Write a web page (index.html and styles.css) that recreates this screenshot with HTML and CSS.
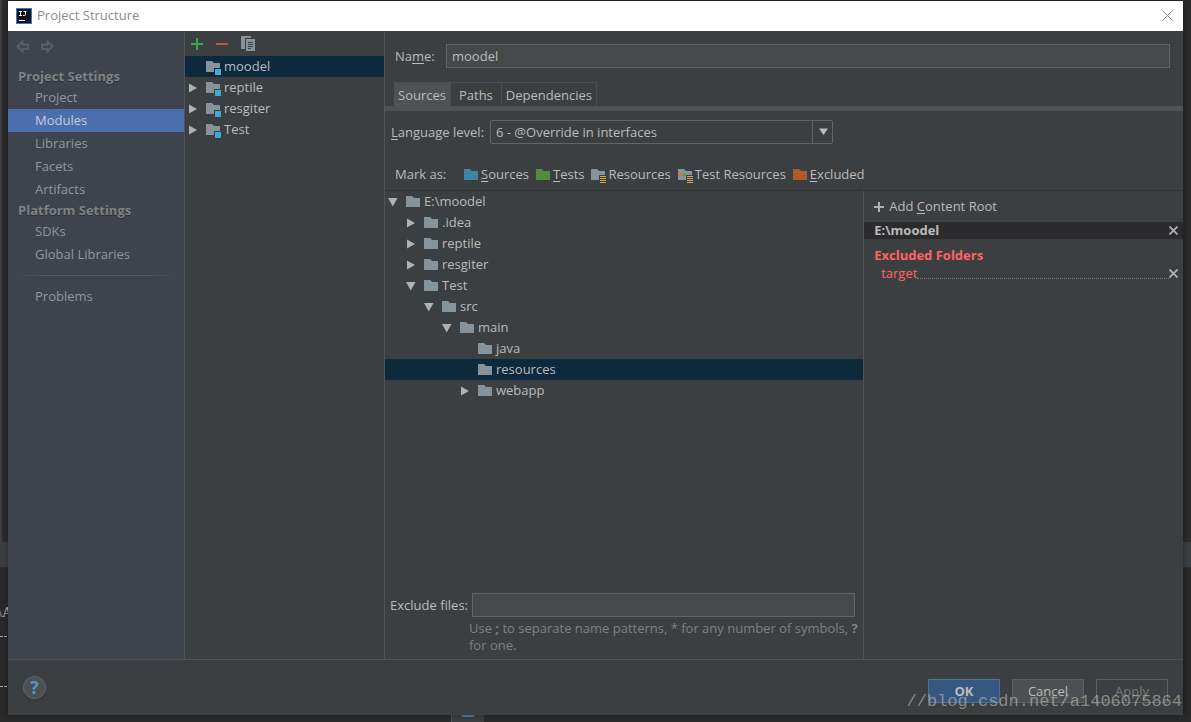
FILE: index.html
```
<!DOCTYPE html>
<html lang="en">
<head>
    <meta charset="UTF-8">
    <meta name="viewport" content="width=device-width, initial-scale=1.0">
    <title>Project Structure</title>
    <link rel="stylesheet" href="styles.css">
</head>
<body>
    <!-- Shared icons -->
    <svg class="sprite" aria-hidden="true">
        <symbol id="folder" viewBox="0 0 14 11"><path fill="currentColor" d="M0 0h6l2 2h6v9H0z"/></symbol>
        <symbol id="module" viewBox="0 0 16 14"><path fill="#87939a" d="M0 0h6l2 2h6v5H8v4H0z"/><path fill="#40a9d4" d="M9 8h6v6H9z"/></symbol>
        <symbol id="resources" viewBox="0 0 16 14"><path fill="#87939a" d="M0 0h6l2 2h6v4H8v5H0z"/><path fill="#d9a74a" d="M9 7h6v1H9zM9 9h6v1H9zM9 11h6v1H9zM9 13h6v1H9z"/></symbol>
        <symbol id="test-resources" viewBox="0 0 16 14"><path fill="#87939a" d="M0 0h6l2 2h6v4H8v5H0z"/><path fill="#f26522" d="M4 3v5L1 5.500z"/><path fill="#4fa52e" d="M5 3v5l3-2.500z"/><path fill="#d9a74a" d="M9 7h6v1H9zM9 9h6v1H9zM9 11h6v1H9zM9 13h6v1H9z"/></symbol>
        <symbol id="right" viewBox="0 0 10 10"><path fill="#afb1b3" d="M1 0.500v9L9 5z"/></symbol>
        <symbol id="down" viewBox="0 0 10 10"><path fill="#afb1b3" d="M0 1h9.500L4.750 9.500z"/></symbol>
        <symbol id="close" viewBox="0 0 9 9"><path fill="none" stroke="#b4b6b8" stroke-width="1.600" d="M.5.5l8 8M8.500.5l-8 8"/></symbol>
    </svg>

    <!-- Editor behind the dialog -->
    <div class="backdrop" aria-hidden="true">
        <div class="editor"></div>
        <div class="tool-bar"></div>
        <div class="console">
            <span class="path">\A</span>
            <span class="dash"></span>
            <span class="dash"></span>
        </div>
        <div class="task"><span></span></div>
    </div>

    <div class="dialog">
        <header class="title-bar">
            <svg class="logo" width="16" height="16" viewBox="0 0 16 16" aria-hidden="true">
                <rect width="16" height="16" fill="#1a80e6"/>
                <rect x="1" y="1" width="14" height="14" fill="#111"/>
                <path fill="none" stroke="#fff" d="M3 3.500h3M4.500 3v5M3 7.500h3M7.500 3.500h3M9.500 3v3.500q0 1-1 1H7"/>
                <path fill="#fff" d="M3 12h6v1H3z"/>
            </svg>
            <h1>Project Structure</h1>
            <button class="icon-btn" aria-label="Close window">
                <svg width="11" height="11" viewBox="0 0 11 11"><path fill="none" stroke="#888" d="M.5.5l10 10M10.500.5l-10 10"/></svg>
            </button>
        </header>

        <div class="panels">
            <nav class="sidebar">
                <div class="history">
                    <button class="icon-btn" aria-label="Back">
                        <svg width="13" height="13" viewBox="0 0 13 13"><path fill="none" stroke="#5c5e61" stroke-width="2" d="M6.500 1.500L1.500 6.500l5 5V9H12V4.500H6.500z"/></svg>
                    </button>
                    <button class="icon-btn" aria-label="Forward">
                        <svg width="13" height="13" viewBox="0 0 13 13"><path fill="none" stroke="#5c5e61" stroke-width="2" d="M6.500 1.500l5 5-5 5V9H1V4.500h5.500z"/></svg>
                    </button>
                </div>
                <h2>Project Settings</h2>
                <a href="#">Project</a>
                <a href="#" class="active">Modules</a>
                <a href="#">Libraries</a>
                <a href="#">Facets</a>
                <a href="#">Artifacts</a>
                <h2>Platform Settings</h2>
                <a href="#">SDKs</a>
                <a href="#">Global Libraries</a>
                <hr>
                <a href="#">Problems</a>
            </nav>

            <section class="modules">
                <div class="toolbar">
                    <button class="icon-btn" aria-label="Add">
                        <svg width="12" height="12" viewBox="0 0 12 12"><path fill="#32a950" d="M5 0h2v5h5v2H7v5H5V7H0V5h5z"/></svg>
                    </button>
                    <button class="icon-btn" aria-label="Remove">
                        <svg width="12" height="12" viewBox="0 0 12 12"><path fill="#c94f46" d="M0 5h12v2H0z"/></svg>
                    </button>
                    <button class="icon-btn" aria-label="Copy">
                        <svg width="14" height="15" viewBox="0 0 14 15"><path fill="#87939a" d="M0 0h10v2H4v11H0z"/><path fill="#87939a" d="M5 3h9v12H5z"/><path fill="#3c3f41" d="M7 6h5v1H7zM7 8h5v1H7zM7 10h5v1H7zM7 12h3v1H7z"/></svg>
                    </button>
                </div>
                <ul class="tree">
                    <li class="selected"><span class="arrow"></span><svg class="badge-icon"><use href="#module"/></svg>moodel</li>
                    <li><svg class="arrow"><use href="#right"/></svg><svg class="badge-icon"><use href="#module"/></svg>reptile</li>
                    <li><svg class="arrow"><use href="#right"/></svg><svg class="badge-icon"><use href="#module"/></svg>resgiter</li>
                    <li><svg class="arrow"><use href="#right"/></svg><svg class="badge-icon"><use href="#module"/></svg>Test</li>
                </ul>
            </section>

            <main class="editor-pane">
                <div class="name-row">
                    <label for="name">Na<u>m</u>e:</label>
                    <input type="text" id="name" value="moodel">
                </div>

                <div class="tabs" role="tablist">
                    <button class="active" role="tab" aria-selected="true">Sources</button>
                    <button role="tab">Paths</button>
                    <button role="tab">Dependencies</button>
                </div>

                <div class="level-row">
                    <label for="level"><u>L</u>anguage level:</label>
                    <div class="select">
                        <select id="level">
                            <option>6 - @Override in interfaces</option>
                        </select>
                        <span class="select-arrow"><svg width="9" height="8" viewBox="0 0 9 8"><path fill="#bbb" d="M0 0.500h9L4.500 7z"/></svg></span>
                    </div>
                </div>

                <div class="mark-row">
                    <span class="mark-label">Mark as:</span>
                    <button><svg class="folder sources"><use href="#folder"/></svg><span><u>S</u>ources</span></button>
                    <button><svg class="folder tests"><use href="#folder"/></svg><span><u>T</u>ests</span></button>
                    <button><svg class="badge-icon"><use href="#resources"/></svg><span>Resources</span></button>
                    <button><svg class="badge-icon"><use href="#test-resources"/></svg><span>Test Resources</span></button>
                    <button><svg class="folder excluded"><use href="#folder"/></svg><span><u>E</u>xcluded</span></button>
                </div>

                <div class="content">
                    <div class="content-tree">
                        <ul class="tree">
                            <li><svg class="arrow"><use href="#down"/></svg><svg class="folder"><use href="#folder"/></svg>E:\moodel</li>
                            <li class="depth-1"><svg class="arrow"><use href="#right"/></svg><svg class="folder"><use href="#folder"/></svg>.idea</li>
                            <li class="depth-1"><svg class="arrow"><use href="#right"/></svg><svg class="folder"><use href="#folder"/></svg>reptile</li>
                            <li class="depth-1"><svg class="arrow"><use href="#right"/></svg><svg class="folder"><use href="#folder"/></svg>resgiter</li>
                            <li class="depth-1"><svg class="arrow"><use href="#down"/></svg><svg class="folder"><use href="#folder"/></svg>Test</li>
                            <li class="depth-2"><svg class="arrow"><use href="#down"/></svg><svg class="folder"><use href="#folder"/></svg>src</li>
                            <li class="depth-3"><svg class="arrow"><use href="#down"/></svg><svg class="folder"><use href="#folder"/></svg>main</li>
                            <li class="depth-4"><span class="arrow"></span><svg class="folder"><use href="#folder"/></svg>java</li>
                            <li class="depth-4 selected"><span class="arrow"></span><svg class="folder"><use href="#folder"/></svg>resources</li>
                            <li class="depth-4"><svg class="arrow"><use href="#right"/></svg><svg class="folder"><use href="#folder"/></svg>webapp</li>
                        </ul>
                        <div class="exclude">
                            <label for="exclude">Exclude files:</label>
                            <input type="text" id="exclude">
                            <p>Use <b>;</b> to separate name patterns, * for any number of symbols, <b>?</b> for one.</p>
                        </div>
                    </div>

                    <aside class="roots">
                        <button class="add-root">
                            <svg width="10" height="10" viewBox="0 0 10 10"><path fill="#afb1b3" d="M4 0h2v4h4v2H6v4H4V6H0V4h4z"/></svg>
                            <span>Add <u>C</u>ontent Root</span>
                        </button>
                        <div class="root">
                            <strong>E:\moodel</strong>
                            <button class="icon-btn" aria-label="Remove content root"><svg width="9" height="9"><use href="#close"/></svg></button>
                        </div>
                        <h3>Excluded Folders</h3>
                        <div class="excluded-folder">
                            <a href="#">target</a>
                            <span class="dots"></span>
                            <button class="icon-btn" aria-label="Remove target"><svg width="9" height="9"><use href="#close"/></svg></button>
                        </div>
                    </aside>
                </div>
            </main>
        </div>

        <footer class="actions">
            <button class="help" aria-label="Help">?</button>
            <button class="btn primary">OK</button>
            <button class="btn">Cancel</button>
            <button class="btn" disabled>Apply</button>
        </footer>
    </div>

    <div class="watermark">//blog.csdn.net/a1406075864</div>
</body>
</html>
```

FILE: styles.css
```
* {
    margin: 0;
    padding: 0;
    box-sizing: border-box;
}

body {
    display: flex;
    height: 100vh;
    padding: 1px 8px 7px;
    overflow: hidden;
    background: #2b2b2b;
    color: #bbbbbb;
    font-family: "Open Sans", "Noto Sans", sans-serif;
    font-size: 13px;
    line-height: 17px;
}

button,
input,
select {
    font: inherit;
    color: inherit;
}

button {
    background: none;
    border: none;
}

svg {
    display: block;
    flex-shrink: 0;
}

ul {
    list-style: none;
}

u {
    text-underline-offset: 2px;
}

.sprite {
    position: absolute;
    width: 0;
    height: 0;
}

.icon-btn {
    display: flex;
}

/* Editor behind the dialog */
.backdrop {
    position: absolute;
    inset: 0;
    display: flex;
    flex-direction: column;
    overflow: hidden;
}

.editor {
    flex: 1;
    border-left: 2px solid #3c3f41;
    background: #2b2b2b;
}

.tool-bar {
    height: 26px;
    background: #3c3f41;
    border-bottom: 1px solid #323232;
}

.console {
    height: 146px;
    padding-top: 36px;
    background: #292929;
}

.path {
    display: block;
    margin-left: -2px;
    font-family: "Liberation Serif", serif;
    font-size: 14px;
}

.dash {
    display: block;
    width: 8px;
    height: 1px;
    margin-top: 15px;
    margin-bottom: 49px;
    background: repeating-linear-gradient(90deg, #aaa 0 3px, #292929 3px 4px);
}

.dash + .dash {
    margin-top: 0;
}

.task {
    width: 33px;
    height: 8px;
    margin-left: 451px;
    background: #3c3f41;
    border-left: 1px solid #555;
}

.task span {
    display: block;
    width: 14px;
    height: 3px;
    margin: 0 auto;
    border-radius: 0 0 7px 7px;
    background: #4a88a8;
}

/* Dialog */
.dialog {
    position: relative;
    display: flex;
    flex: 1;
    flex-direction: column;
    background: #3c3f41;
    box-shadow: 0 0 6px rgba(0, 0, 0, 0.4);
}

.title-bar {
    display: flex;
    align-items: center;
    height: 30px;
    padding: 0 10px 1px 8px;
    background: #ffffff;
    color: #8c8c8c;
}

.title-bar h1 {
    flex: 1;
    margin-left: 5px;
    font-size: 13px;
    font-weight: normal;
}

.panels {
    display: flex;
    flex: 1;
    min-height: 0;
}

/* Sidebar */
.sidebar {
    width: 177px;
    background: #3f434c;
    border-right: 1px solid #515355;
    color: #939699;
}

.history {
    display: flex;
    gap: 12px;
    height: 36px;
    padding: 9px 9px 0 8px;
}

.sidebar h2 {
    padding-left: 10px;
    color: #808284;
    font-size: 13px;
    line-height: 19px;
    text-shadow: 0 1px #2e3136;
}

.sidebar a {
    display: block;
    padding-left: 27px;
    color: inherit;
    line-height: 23px;
    text-decoration: none;
}

.sidebar a.active {
    background: #4b6eaf;
    color: #c8ccd4;
}

.sidebar hr {
    height: 1px;
    margin: 9px;
    border: none;
    background: linear-gradient(90deg, transparent, #55585c 15%, #55585c 85%, transparent);
}

/* Module list */
.modules {
    width: 200px;
    border-right: 1px solid #515355;
}

.toolbar {
    display: flex;
    align-items: center;
    gap: 13px;
    height: 25px;
    padding-left: 6px;
}

.tree li {
    display: flex;
    align-items: center;
    height: 21px;
    padding-left: 3px;
}

.tree .depth-1 {
    padding-left: 21px;
}

.tree .depth-2 {
    padding-left: 39px;
}

.tree .depth-3 {
    padding-left: 57px;
}

.tree .depth-4 {
    padding-left: 75px;
}

.tree .selected {
    background: #0d293e;
}

.arrow {
    width: 10px;
    height: 10px;
    margin-right: 8px;
}

.folder {
    width: 14px;
    height: 11px;
    margin-right: 4px;
    color: #87939a;
}

.badge-icon {
    width: 16px;
    height: 14px;
    margin: 3px 2px 0 0;
}

.folder.sources {
    color: #3e86a0;
}

.folder.tests {
    color: #548a42;
}

.folder.excluded {
    color: #ad5a2c;
}

/* Module editor */
.editor-pane {
    display: flex;
    flex: 1;
    flex-direction: column;
    min-width: 0;
}

.editor-pane input {
    min-width: 0;
    height: 24px;
    padding: 0 5px;
    background: #45494a;
    border: 1px solid #646464;
}

.name-row {
    display: flex;
    align-items: center;
    padding: 13px 13px 14px 10px;
}

.name-row label {
    width: 51px;
}

.name-row input {
    flex: 1;
}

.tabs {
    display: flex;
    padding-left: 9px;
}

.tabs button {
    height: 24px;
    padding: 2px 4px 0;
    border: 1px solid #4b4e50;
    border-width: 1px 1px 0 0;
}

.tabs button:nth-child(2) {
    padding: 2px 8px 0;
}

.tabs .active {
    background: #4e5254;
}

.level-row {
    display: flex;
    align-items: center;
    padding: 9px 6px 0;
    border-top: 5px solid #4e5254;
}

.level-row label {
    width: 99px;
}

.select {
    display: grid;
    width: 343px;
}

.select select,
.select-arrow {
    grid-area: 1 / 1;
}

.select select {
    height: 24px;
    padding-left: 5px;
    appearance: none;
    background: #3c3f41;
    border: 1px solid #646464;
    border-radius: 2px;
}

.select-arrow {
    display: flex;
    align-items: center;
    justify-content: center;
    justify-self: end;
    width: 21px;
    border-left: 1px solid #646464;
    pointer-events: none;
}

.mark-row {
    display: flex;
    align-items: center;
    gap: 7px;
    height: 47px;
    padding: 14px 10px 0;
    border-bottom: 1px solid #313335;
}

.mark-label {
    width: 62px;
}

.mark-row button {
    display: flex;
    align-items: center;
}

.mark-row .folder {
    margin-right: 3px;
}

.mark-row .badge-icon {
    margin-right: 1px;
}

.content {
    display: flex;
    flex: 1;
}

.content-tree {
    display: flex;
    flex: 3;
    flex-direction: column;
    justify-content: space-between;
    border-right: 1px solid #515355;
}

.exclude {
    display: grid;
    grid-template-columns: 82px 1fr;
    align-items: center;
    padding: 0 8px 5px 5px;
}

.exclude p {
    grid-column: 2;
    margin: 3px -8px 0 -3px;
    color: #808080;
}

/* Content roots */
.roots {
    flex: 2;
}

.add-root {
    display: flex;
    align-items: center;
    gap: 5px;
    height: 31px;
    padding-left: 10px;
}

.root {
    display: flex;
    align-items: center;
    justify-content: space-between;
    padding: 0 5px 0 10px;
    background: #2b2b2d;
}

.roots h3 {
    padding: 8px 10px 0;
    color: #ff6464;
    font-size: 13px;
}

.excluded-folder {
    display: flex;
    align-items: center;
    padding: 1px 5px 0 17px;
}

.excluded-folder a {
    color: #ff6464;
    text-decoration: none;
}

.dots {
    flex: 1;
    height: 11px;
    border-bottom: 1px dotted #777;
}

/* Footer */
.actions {
    display: flex;
    align-items: center;
    gap: 12px;
    height: 56px;
    padding: 7px 15px 0;
    border-top: 1px solid #515355;
}

.help {
    width: 23px;
    height: 23px;
    margin: -8px auto 0 0;
    border: 1px solid #626567;
    border-radius: 50%;
    background: #4c5052;
    box-shadow: 0 5px 1px -1px #383b3d;
    color: #4a9cc8;
    font-size: 18px;
    font-weight: bold;
    line-height: 20px;
}

.btn {
    width: 72px;
    height: 24px;
    border: 1px solid #5e6162;
    border-radius: 1px;
    background: #4c5052;
}

.btn.primary {
    background: #365880;
    border-color: #4a7398;
    font-weight: bold;
}

.btn:disabled {
    background: none;
    color: #777777;
}

.watermark {
    position: absolute;
    right: 9px;
    bottom: 8px;
    color: rgba(190, 190, 180, 0.6);
    font-family: "Liberation Mono", monospace;
    font-size: 17px;
    line-height: 24px;
    pointer-events: none;
}
```
